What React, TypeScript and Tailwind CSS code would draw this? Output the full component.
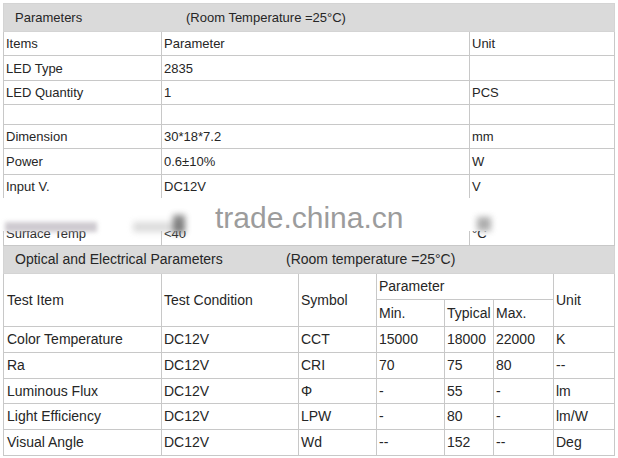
import React from 'react';

// 상단 사양표 행 데이터
const topRows: { a: string; b: string; c: string; h: string }[] = [
  { a: 'Items', b: 'Parameter', c: 'Unit', h: 'h-[24px]' },
  { a: 'LED Type', b: '2835', c: '', h: 'h-[25px]' },
  { a: 'LED Quantity', b: '1', c: 'PCS', h: 'h-[24px]' },
  { a: '', b: '', c: '', h: 'h-[20px]' },
  { a: 'Dimension', b: '30*18*7.2', c: 'mm', h: 'h-[24px]' },
  { a: 'Power', b: '0.6±10%', c: 'W', h: 'h-[26px]' },
  { a: 'Input V.', b: 'DC12V', c: 'V', h: 'h-[24px]' },
];

// 광학/전기 특성 데이터
const optRows: { item: string; sym: string; min: string; typ: string; max: string; unit: string; h: string }[] = [
  { item: 'Color Temperature', sym: 'CCT', min: '15000', typ: '18000', max: '22000', unit: 'K', h: 'h-[26px]' },
  { item: 'Ra', sym: 'CRI', min: '70', typ: '75', max: '80', unit: '--', h: 'h-[26px]' },
  { item: 'Luminous Flux', sym: 'Φ', min: '-', typ: '55', max: '-', unit: 'lm', h: 'h-[25px]' },
  { item: 'Light Efficiency', sym: 'LPW', min: '-', typ: '80', max: '-', unit: 'lm/W', h: 'h-[26px]' },
  { item: 'Visual Angle', sym: 'Wd', min: '--', typ: '152', max: '--', unit: 'Deg', h: 'h-[26px]' },
];

const td = 'border border-[#c8c8c8] px-[2px] align-middle font-normal text-left';

export default function App() {
  return (
    <div className="min-h-screen w-[618px] bg-white pl-[3px] pt-[3px] text-[#262626] font-['Liberation_Sans',Arial,sans-serif]">
      <div className="relative w-[611px]">
        {/* 기본 파라미터 */}
        <table className="w-[611px] table-fixed border-collapse text-[13px] leading-none">
          <colgroup>
            <col className="w-[158px]" />
            <col className="w-[308px]" />
            <col className="w-[145px]" />
          </colgroup>
          <tbody>
            <tr className="h-[28px] bg-[#dadada]">
              <td colSpan={3} className="border border-[#d4d4d4] pl-[11px] align-middle">
                <span className="inline-block w-[171px]">Parameters</span>
                <span>(Room Temperature =25°C)</span>
              </td>
            </tr>
            {topRows.map((r, i) => (
              <tr key={i} className={r.h}>
                <td className={td}>{r.a}</td>
                <td className={td}>{r.b}</td>
                <td className={td}>{r.c}</td>
              </tr>
            ))}
            <tr className="h-[47px]">
              <td className={td + ' !align-bottom pb-[5px]'}>Surface Temp</td>
              <td className={td + ' !align-bottom pb-[5px]'}>&lt;40</td>
              <td className={td + ' !align-bottom pb-[5px]'}>°C</td>
            </tr>
          </tbody>
        </table>

        {/* 광학 및 전기 파라미터 */}
        <table className="w-[611px] table-fixed border-collapse text-[14px] leading-none">
          <colgroup>
            <col className="w-[158px]" />
            <col className="w-[137px]" />
            <col className="w-[78px]" />
            <col className="w-[68px]" />
            <col className="w-[49px]" />
            <col className="w-[60px]" />
            <col className="w-[61px]" />
          </colgroup>
          <tbody>
            <tr className="h-[27px] bg-[#dadada]">
              <td colSpan={7} className="border border-t-0 border-[#d4d4d4] pl-[11px] align-middle">
                <span className="inline-block w-[271px]">Optical and Electrical Parameters</span>
                <span>(Room temperature =25°C)</span>
              </td>
            </tr>
            <tr className="h-[26px]">
              <td rowSpan={2} className={td + ' pl-[3px]'}>Test Item</td>
              <td rowSpan={2} className={td}>Test Condition</td>
              <td rowSpan={2} className={td}>Symbol</td>
              <td colSpan={3} className={td}>Parameter</td>
              <td rowSpan={2} className={td}>Unit</td>
            </tr>
            <tr className="h-[27px]">
              <td className={td}>Min.</td>
              <td className={td}>Typical</td>
              <td className={td}>Max.</td>
            </tr>
            {optRows.map((r) => (
              <tr key={r.item} className={r.h}>
                <td className={td + ' pl-[3px]'}>{r.item}</td>
                <td className={td}>DC12V</td>
                <td className={td}>{r.sym}</td>
                <td className={td}>{r.min}</td>
                <td className={td}>{r.typ}</td>
                <td className={td}>{r.max}</td>
                <td className={td}>{r.unit}</td>
              </tr>
            ))}
          </tbody>
        </table>

        {/* 워터마크 영역 */}
        <div className="pointer-events-none absolute left-0 top-[195px] h-[33px] w-[611px] bg-white" />
        <div className="pointer-events-none absolute left-[2px] top-[219px] h-[10px] w-[92px] bg-[#b9b4bc] blur-[2px] opacity-70" />
        <div className="pointer-events-none absolute left-[130px] top-[219px] h-[10px] w-[50px] bg-[#c4c4c4] blur-[3px] opacity-60" />
        <div className="pointer-events-none absolute left-[170px] top-[212px] h-[18px] w-[12px] bg-[#555] blur-[3px] opacity-70" />
        <div className="pointer-events-none absolute left-[474px] top-[214px] h-[14px] w-[14px] bg-[#777] blur-[3px] opacity-60" />
        <div className="pointer-events-none absolute left-[212px] top-[200px] text-[30px] leading-[30px] text-[#9c9c9c] font-['Liberation_Sans',Arial,sans-serif]">
          trade.china.cn
        </div>
      </div>
    </div>
  );
}
